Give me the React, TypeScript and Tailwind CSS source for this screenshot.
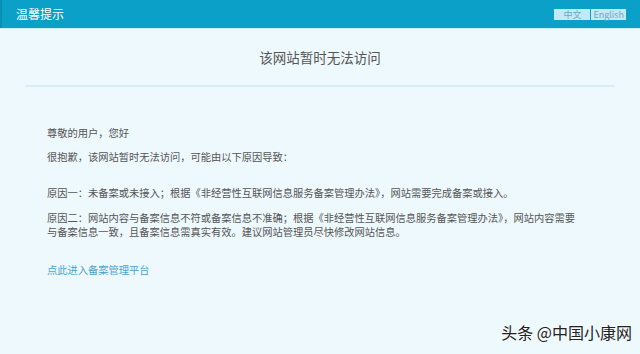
import React from "react";

export default function App() {
  const font = { fontFamily: '"Noto Sans CJK SC", "Noto Sans", sans-serif' };
  return (
    <div className="relative w-[640px] h-[354px] bg-[#eef9fd] overflow-hidden" style={font}>
      <div className="h-[28px] bg-[#0aa0c8] border-l-2 border-[#0890b4] flex items-center justify-between pl-[14px] pr-[14px]">
        <span className="text-white text-[12px] leading-none">温馨提示</span>
        <div className="flex h-[11px] bg-[#c3e9f6] text-[9px] leading-[11px] text-[#6aa9c4]">
          <span className="px-[9px]">中文</span>
          <span className="w-px bg-[#0aa0c8]" />
          <span className="px-[2px]">English</span>
        </div>
      </div>
      <div className="h-px bg-[#c9eef8]" />
      <div className="px-[25px]">
        <div className="h-[56px] flex items-center justify-center text-[13.5px] text-[#555] leading-[20px]">
          该网站暂时无法访问
        </div>
        <div className="h-[2px] bg-[#d8edf4]" />
        <div className="pl-[22px] text-[10.25px] leading-[14px] text-[#555]">
          <p className="mt-[39px]">尊敬的用户，您好</p>
          <p className="mt-[10px]">很抱歉，该网站暂时无法访问，可能由以下原因导致：</p>
          <p className="mt-[22px]">原因一：未备案或未接入；根据《非经营性互联网信息服务备案管理办法》，网站需要完成备案或接入。</p>
          <p className="mt-[11px] w-[532px]">原因二：网站内容与备案信息不符或备案信息不准确；根据《非经营性互联网信息服务备案管理办法》，网站内容需要与备案信息一致，且备案信息需真实有效。建议网站管理员尽快修改网站信息。</p>
          <p className="mt-[24px] text-[#4aa2cf]">点此进入备案管理平台</p>
        </div>
      </div>
      <div className="absolute right-[8px] top-[322px] text-[16px] leading-[20px] text-[#222] [text-shadow:0_0_2px_#fff]">
        头条 @中国小康网
      </div>
    </div>
  );
}
